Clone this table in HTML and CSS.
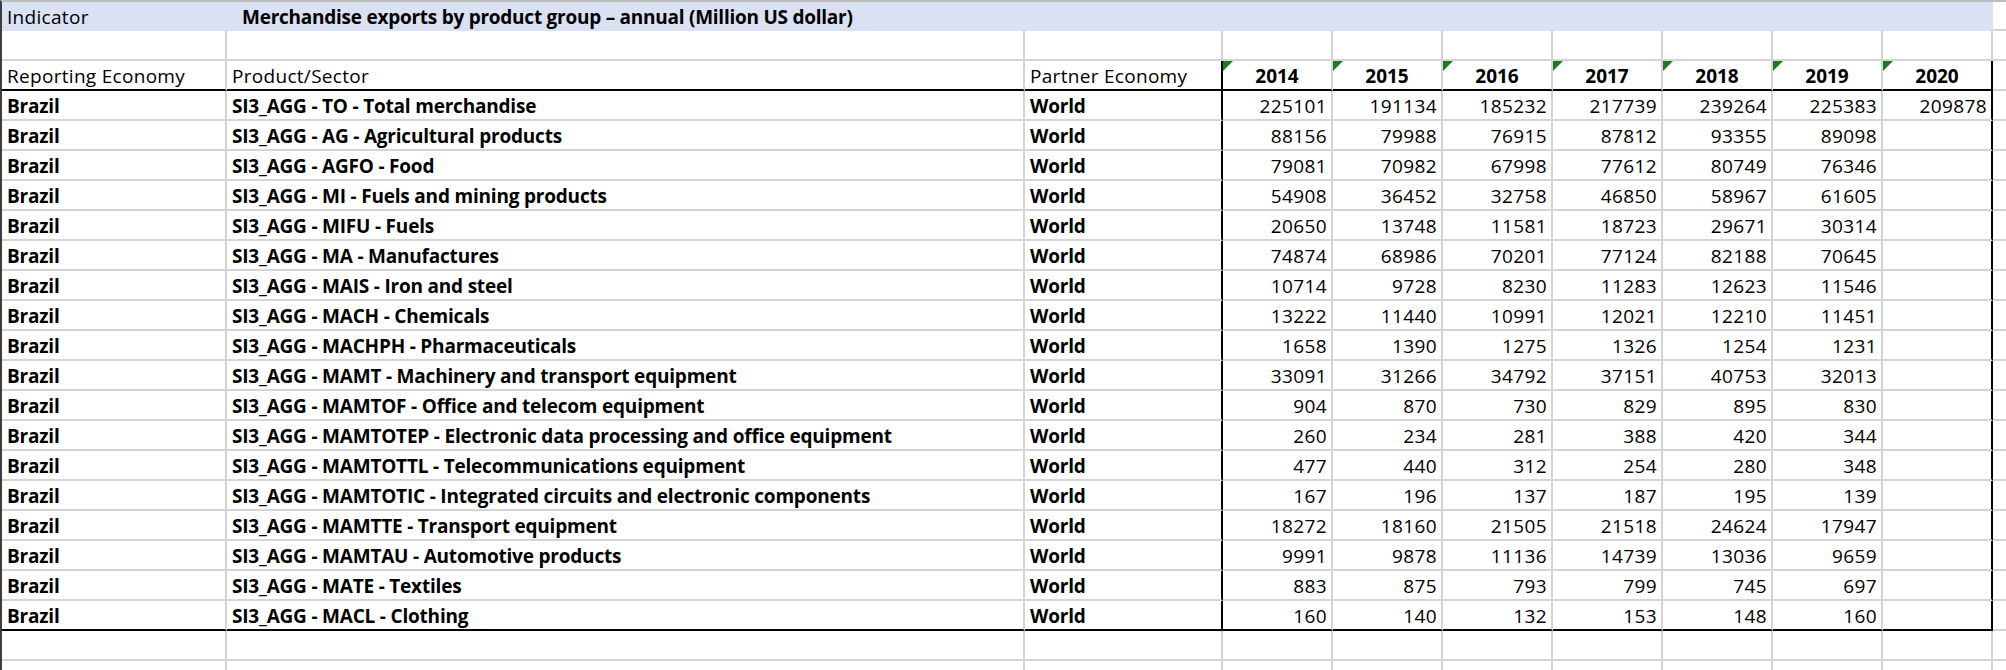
FILE: index.html
```html
<!DOCTYPE html>
<html lang="en">
<head>
<meta charset="utf-8">
<title>Merchandise exports by product group</title>
<link rel="stylesheet" href="styles.css">
</head>
<body>
<div class="sheet">
  <div class="row row-indicator">
    <div class="cell fill">Indicator</div>
    <div class="cell fill title">Merchandise exports by product group – annual (Million US dollar)</div>
    <div class="cell tail"></div>
  </div>
  <div class="row">
    <div class="cell"></div><div class="cell"></div><div class="cell"></div>
    <div class="cell"></div><div class="cell"></div><div class="cell"></div><div class="cell"></div><div class="cell"></div><div class="cell"></div><div class="cell"></div>
    <div class="cell tail"></div>
  </div>
  <div class="row row-head">
    <div class="cell">Reporting Economy</div>
    <div class="cell">Product/Sector</div>
    <div class="cell box-l">Partner Economy</div>
    <div class="cell year flag">2014</div>
    <div class="cell year flag">2015</div>
    <div class="cell year flag">2016</div>
    <div class="cell year flag">2017</div>
    <div class="cell year flag">2018</div>
    <div class="cell year flag">2019</div>
    <div class="cell year flag box-r">2020</div>
    <div class="cell tail"></div>
  </div>

  <div class="row data"><div class="cell b">Brazil</div><div class="cell b">SI3_AGG - TO - Total merchandise</div><div class="cell b box-l">World</div><div class="cell num">225101</div><div class="cell num">191134</div><div class="cell num">185232</div><div class="cell num">217739</div><div class="cell num">239264</div><div class="cell num">225383</div><div class="cell num box-r">209878</div><div class="cell tail"></div></div>
  <div class="row data"><div class="cell b">Brazil</div><div class="cell b">SI3_AGG - AG - Agricultural products</div><div class="cell b box-l">World</div><div class="cell num">88156</div><div class="cell num">79988</div><div class="cell num">76915</div><div class="cell num">87812</div><div class="cell num">93355</div><div class="cell num">89098</div><div class="cell num box-r"></div><div class="cell tail"></div></div>
  <div class="row data"><div class="cell b">Brazil</div><div class="cell b">SI3_AGG - AGFO - Food</div><div class="cell b box-l">World</div><div class="cell num">79081</div><div class="cell num">70982</div><div class="cell num">67998</div><div class="cell num">77612</div><div class="cell num">80749</div><div class="cell num">76346</div><div class="cell num box-r"></div><div class="cell tail"></div></div>
  <div class="row data"><div class="cell b">Brazil</div><div class="cell b">SI3_AGG - MI - Fuels and mining products</div><div class="cell b box-l">World</div><div class="cell num">54908</div><div class="cell num">36452</div><div class="cell num">32758</div><div class="cell num">46850</div><div class="cell num">58967</div><div class="cell num">61605</div><div class="cell num box-r"></div><div class="cell tail"></div></div>
  <div class="row data"><div class="cell b">Brazil</div><div class="cell b">SI3_AGG - MIFU - Fuels</div><div class="cell b box-l">World</div><div class="cell num">20650</div><div class="cell num">13748</div><div class="cell num">11581</div><div class="cell num">18723</div><div class="cell num">29671</div><div class="cell num">30314</div><div class="cell num box-r"></div><div class="cell tail"></div></div>
  <div class="row data"><div class="cell b">Brazil</div><div class="cell b">SI3_AGG - MA - Manufactures</div><div class="cell b box-l">World</div><div class="cell num">74874</div><div class="cell num">68986</div><div class="cell num">70201</div><div class="cell num">77124</div><div class="cell num">82188</div><div class="cell num">70645</div><div class="cell num box-r"></div><div class="cell tail"></div></div>
  <div class="row data"><div class="cell b">Brazil</div><div class="cell b">SI3_AGG - MAIS - Iron and steel</div><div class="cell b box-l">World</div><div class="cell num">10714</div><div class="cell num">9728</div><div class="cell num">8230</div><div class="cell num">11283</div><div class="cell num">12623</div><div class="cell num">11546</div><div class="cell num box-r"></div><div class="cell tail"></div></div>
  <div class="row data"><div class="cell b">Brazil</div><div class="cell b">SI3_AGG - MACH - Chemicals</div><div class="cell b box-l">World</div><div class="cell num">13222</div><div class="cell num">11440</div><div class="cell num">10991</div><div class="cell num">12021</div><div class="cell num">12210</div><div class="cell num">11451</div><div class="cell num box-r"></div><div class="cell tail"></div></div>
  <div class="row data"><div class="cell b">Brazil</div><div class="cell b">SI3_AGG - MACHPH - Pharmaceuticals</div><div class="cell b box-l">World</div><div class="cell num">1658</div><div class="cell num">1390</div><div class="cell num">1275</div><div class="cell num">1326</div><div class="cell num">1254</div><div class="cell num">1231</div><div class="cell num box-r"></div><div class="cell tail"></div></div>
  <div class="row data"><div class="cell b">Brazil</div><div class="cell b">SI3_AGG - MAMT - Machinery and transport equipment</div><div class="cell b box-l">World</div><div class="cell num">33091</div><div class="cell num">31266</div><div class="cell num">34792</div><div class="cell num">37151</div><div class="cell num">40753</div><div class="cell num">32013</div><div class="cell num box-r"></div><div class="cell tail"></div></div>
  <div class="row data"><div class="cell b">Brazil</div><div class="cell b">SI3_AGG - MAMTOF - Office and telecom equipment</div><div class="cell b box-l">World</div><div class="cell num">904</div><div class="cell num">870</div><div class="cell num">730</div><div class="cell num">829</div><div class="cell num">895</div><div class="cell num">830</div><div class="cell num box-r"></div><div class="cell tail"></div></div>
  <div class="row data"><div class="cell b">Brazil</div><div class="cell b">SI3_AGG - MAMTOTEP - Electronic data processing and office equipment</div><div class="cell b box-l">World</div><div class="cell num">260</div><div class="cell num">234</div><div class="cell num">281</div><div class="cell num">388</div><div class="cell num">420</div><div class="cell num">344</div><div class="cell num box-r"></div><div class="cell tail"></div></div>
  <div class="row data"><div class="cell b">Brazil</div><div class="cell b">SI3_AGG - MAMTOTTL - Telecommunications equipment</div><div class="cell b box-l">World</div><div class="cell num">477</div><div class="cell num">440</div><div class="cell num">312</div><div class="cell num">254</div><div class="cell num">280</div><div class="cell num">348</div><div class="cell num box-r"></div><div class="cell tail"></div></div>
  <div class="row data"><div class="cell b">Brazil</div><div class="cell b">SI3_AGG - MAMTOTIC - Integrated circuits and electronic components</div><div class="cell b box-l">World</div><div class="cell num">167</div><div class="cell num">196</div><div class="cell num">137</div><div class="cell num">187</div><div class="cell num">195</div><div class="cell num">139</div><div class="cell num box-r"></div><div class="cell tail"></div></div>
  <div class="row data"><div class="cell b">Brazil</div><div class="cell b">SI3_AGG - MAMTTE - Transport equipment</div><div class="cell b box-l">World</div><div class="cell num">18272</div><div class="cell num">18160</div><div class="cell num">21505</div><div class="cell num">21518</div><div class="cell num">24624</div><div class="cell num">17947</div><div class="cell num box-r"></div><div class="cell tail"></div></div>
  <div class="row data"><div class="cell b">Brazil</div><div class="cell b">SI3_AGG - MAMTAU - Automotive products</div><div class="cell b box-l">World</div><div class="cell num">9991</div><div class="cell num">9878</div><div class="cell num">11136</div><div class="cell num">14739</div><div class="cell num">13036</div><div class="cell num">9659</div><div class="cell num box-r"></div><div class="cell tail"></div></div>
  <div class="row data"><div class="cell b">Brazil</div><div class="cell b">SI3_AGG - MATE - Textiles</div><div class="cell b box-l">World</div><div class="cell num">883</div><div class="cell num">875</div><div class="cell num">793</div><div class="cell num">799</div><div class="cell num">745</div><div class="cell num">697</div><div class="cell num box-r"></div><div class="cell tail"></div></div>
  <div class="row data last"><div class="cell b">Brazil</div><div class="cell b">SI3_AGG - MACL - Clothing</div><div class="cell b box-l">World</div><div class="cell num">160</div><div class="cell num">140</div><div class="cell num">132</div><div class="cell num">153</div><div class="cell num">148</div><div class="cell num">160</div><div class="cell num box-r"></div><div class="cell tail"></div></div>

  <div class="row">
    <div class="cell"></div><div class="cell"></div><div class="cell"></div>
    <div class="cell"></div><div class="cell"></div><div class="cell"></div><div class="cell"></div><div class="cell"></div><div class="cell"></div><div class="cell"></div>
    <div class="cell tail"></div>
  </div>
  <div class="row">
    <div class="cell"></div><div class="cell"></div><div class="cell"></div>
    <div class="cell"></div><div class="cell"></div><div class="cell"></div><div class="cell"></div><div class="cell"></div><div class="cell"></div><div class="cell"></div>
    <div class="cell tail"></div>
  </div>
</div>
</body>
</html>
```

FILE: styles.css
```css
html, body {
  margin: 0;
  padding: 0;
  background: #ffffff;
}

body {
  width: 2006px;
  height: 670px;
  overflow: hidden;
  font-family: "Open Sans", Lato, sans-serif;
  font-size: 19px;
  letter-spacing: 0.3px;
  color: #000000;
}

.sheet {
  border-top: 2px solid #bdbdbd;
  border-left: 2px solid #3d3d3d;
  height: 668px;
}

.row {
  display: grid;
  grid-template-columns: 225px 798px 198px repeat(7, 110px) 1fr;
  height: 30px;
}

.cell {
  box-sizing: border-box;
  position: relative;
  display: flex;
  align-items: center;
  padding: 3px 5px 0 5px;
  border-right: 2px solid #d4d4d4;
  border-bottom: 2px solid #d4d4d4;
  white-space: nowrap;
  overflow: visible;
  min-width: 0;
  line-height: 1;
}

.cell.tail {
  border-right: none;
}

/* indicator row */
.row-indicator {
  height: 29px;
}

.row-indicator .fill {
  background: #d9e1f2;
  border-right: none;
  border-bottom: none;
  padding-top: 1px;
}

.row-indicator .title {
  grid-column: 2 / 11;
  font-weight: 700;
  letter-spacing: -0.25px;
  padding-left: 15px;
}

/* header row */
.row-head .cell {
  border-bottom-color: #000000;
}

.row-head .cell.tail {
  border-bottom-color: #d4d4d4;
}

.cell.year {
  justify-content: center;
  font-weight: 700;
  letter-spacing: 0;
}

.cell.flag::before {
  content: "";
  position: absolute;
  top: 0;
  left: 0;
  width: 0;
  height: 0;
  border-top: 10px solid #1d7a21;
  border-right: 10px solid transparent;
}

.box-l {
  border-right-color: #000000 !important;
}

.box-r {
  border-right-color: #000000 !important;
}

/* data */
.cell.b {
  font-weight: 700;
  letter-spacing: -0.2px;
}

.cell.num {
  justify-content: flex-end;
  padding-right: 4px;
  letter-spacing: 0.4px;
}

.row.last .cell {
  border-bottom-color: #000000;
}

.row.last .cell.tail {
  border-bottom-color: #d4d4d4;
}
```
